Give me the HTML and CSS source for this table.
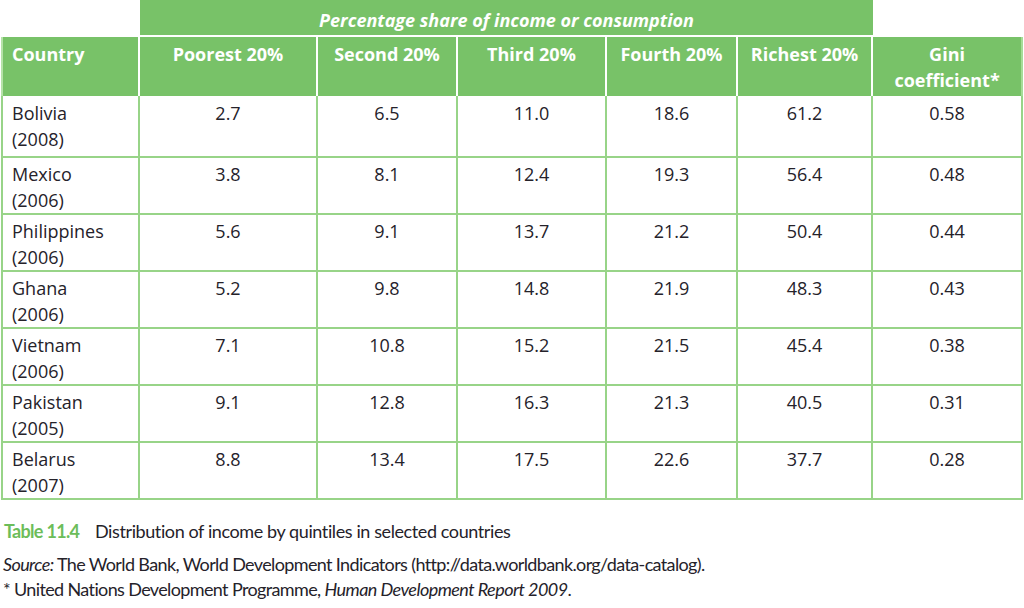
FILE: index.html
```html
<!DOCTYPE html>
<html>
<head>
<meta charset="utf-8">
<link rel="stylesheet" href="styles.css">
</head>
<body>
<div class="page">
  <table class="dist">
    <colgroup>
      <col class="c1"><col class="c2"><col class="c3"><col class="c4"><col class="c5"><col class="c6"><col class="c7">
    </colgroup>
    <thead>
      <tr class="band">
        <th class="blank"></th>
        <th class="span" colspan="5">Percentage share of income or consumption</th>
        <th class="blank"></th>
      </tr>
      <tr class="heads">
        <th class="first">Country</th>
        <th>Poorest 20%</th>
        <th>Second 20%</th>
        <th>Third 20%</th>
        <th>Fourth 20%</th>
        <th>Richest 20%</th>
        <th class="last">Gini<br>coefficient*</th>
      </tr>
    </thead>
    <tbody>
      <tr class="tall"><td class="first">Bolivia<br>(2008)</td><td>2.7</td><td>6.5</td><td>11.0</td><td>18.6</td><td>61.2</td><td>0.58</td></tr>
      <tr><td class="first">Mexico<br>(2006)</td><td>3.8</td><td>8.1</td><td>12.4</td><td>19.3</td><td>56.4</td><td>0.48</td></tr>
      <tr><td class="first">Philippines<br>(2006)</td><td>5.6</td><td>9.1</td><td>13.7</td><td>21.2</td><td>50.4</td><td>0.44</td></tr>
      <tr><td class="first">Ghana<br>(2006)</td><td>5.2</td><td>9.8</td><td>14.8</td><td>21.9</td><td>48.3</td><td>0.43</td></tr>
      <tr><td class="first">Vietnam<br>(2006)</td><td>7.1</td><td>10.8</td><td>15.2</td><td>21.5</td><td>45.4</td><td>0.38</td></tr>
      <tr><td class="first">Pakistan<br>(2005)</td><td>9.1</td><td>12.8</td><td>16.3</td><td>21.3</td><td>40.5</td><td>0.31</td></tr>
      <tr><td class="first">Belarus<br>(2007)</td><td>8.8</td><td>13.4</td><td>17.5</td><td>22.6</td><td>37.7</td><td>0.28</td></tr>
    </tbody>
  </table>
  <div class="caption">
    <span class="label">Table 11.4</span>
    <span class="title">Distribution of income by quintiles in selected countries</span>
  </div>
  <div class="notes">
    <p><em>Source:</em> The World Bank, World Development Indicators (http://data.worldbank.org/data-catalog).</p>
    <p>* United Nations Development Programme, <em class="report">Human Development Report 2009</em>.</p>
  </div>
</div>
</body>
</html>
```
FILE: styles.css
```css
html, body {
  margin: 0;
  padding: 0;
  background: #ffffff;
}

.page {
  padding-left: 1px;
  font-family: "Open Sans", "Lato", sans-serif;
  color: #25222a;
}

.dist {
  border-collapse: separate;
  border-spacing: 0;
  table-layout: fixed;
  width: 1022px;
}

.c1 { width: 139px; }
.c2 { width: 178px; }
.c3 { width: 140px; }
.c4 { width: 149px; }
.c5 { width: 131px; }
.c6 { width: 135px; }
.c7 { width: 150px; }

.band th {
  height: 35px;
  padding: 0;
  border-bottom: 2px solid #ffffff;
}

.band .blank {
  background: #ffffff;
}

.band .span {
  background: #78c268;
  color: #ffffff;
  font-style: italic;
  font-weight: 700;
  font-size: 18px;
  text-align: center;
  vertical-align: middle;
  line-height: 26px;
  padding-top: 4px;
  box-sizing: border-box;
}

.heads th {
  background: #78c268;
  color: #ffffff;
  font-weight: 700;
  font-size: 18px;
  line-height: 26px;
  height: 59px;
  box-sizing: border-box;
  padding: 4px 0 0 0;
  vertical-align: top;
  text-align: center;
  border-right: 2px solid #ffffff;
}

.heads th.first {
  text-align: left;
  padding-left: 9px;
  border-left: 2px solid #b5e2a8;
}

.heads th.last {
  border-right: 2px solid #a6dc98;
}

tbody td {
  font-size: 18px;
  line-height: 26px;
  height: 57px;
  box-sizing: border-box;
  padding: 3px 0 0 0;
  vertical-align: top;
  text-align: center;
  border-right: 2px solid #98d488;
  border-bottom: 2px solid #98d488;
}

tbody tr.tall td {
  height: 62px;
  padding-top: 4px;
}

tbody td.first {
  text-align: left;
  padding-left: 9px;
  border-left: 2px solid #98d488;
}

.caption {
  margin-top: 18px;
  display: flex;
  align-items: baseline;
  font-family: "Lato", sans-serif;
  font-size: 18px;
  line-height: 26px;
}

.caption .label {
  color: #6cbd5a;
  font-weight: 700;
  width: 91px;
  padding-left: 3px;
  letter-spacing: -0.7px;
}

.caption .title {
  color: #25222a;
  letter-spacing: -0.4px;
}

.notes {
  margin-top: 8px;
  font-family: "Lato", sans-serif;
  font-size: 18px;
  line-height: 25px;
  padding-left: 2px;
  letter-spacing: -0.63px;
}

.notes p {
  margin: 0;
}

.notes .report {
  letter-spacing: -0.55px;
}
```
